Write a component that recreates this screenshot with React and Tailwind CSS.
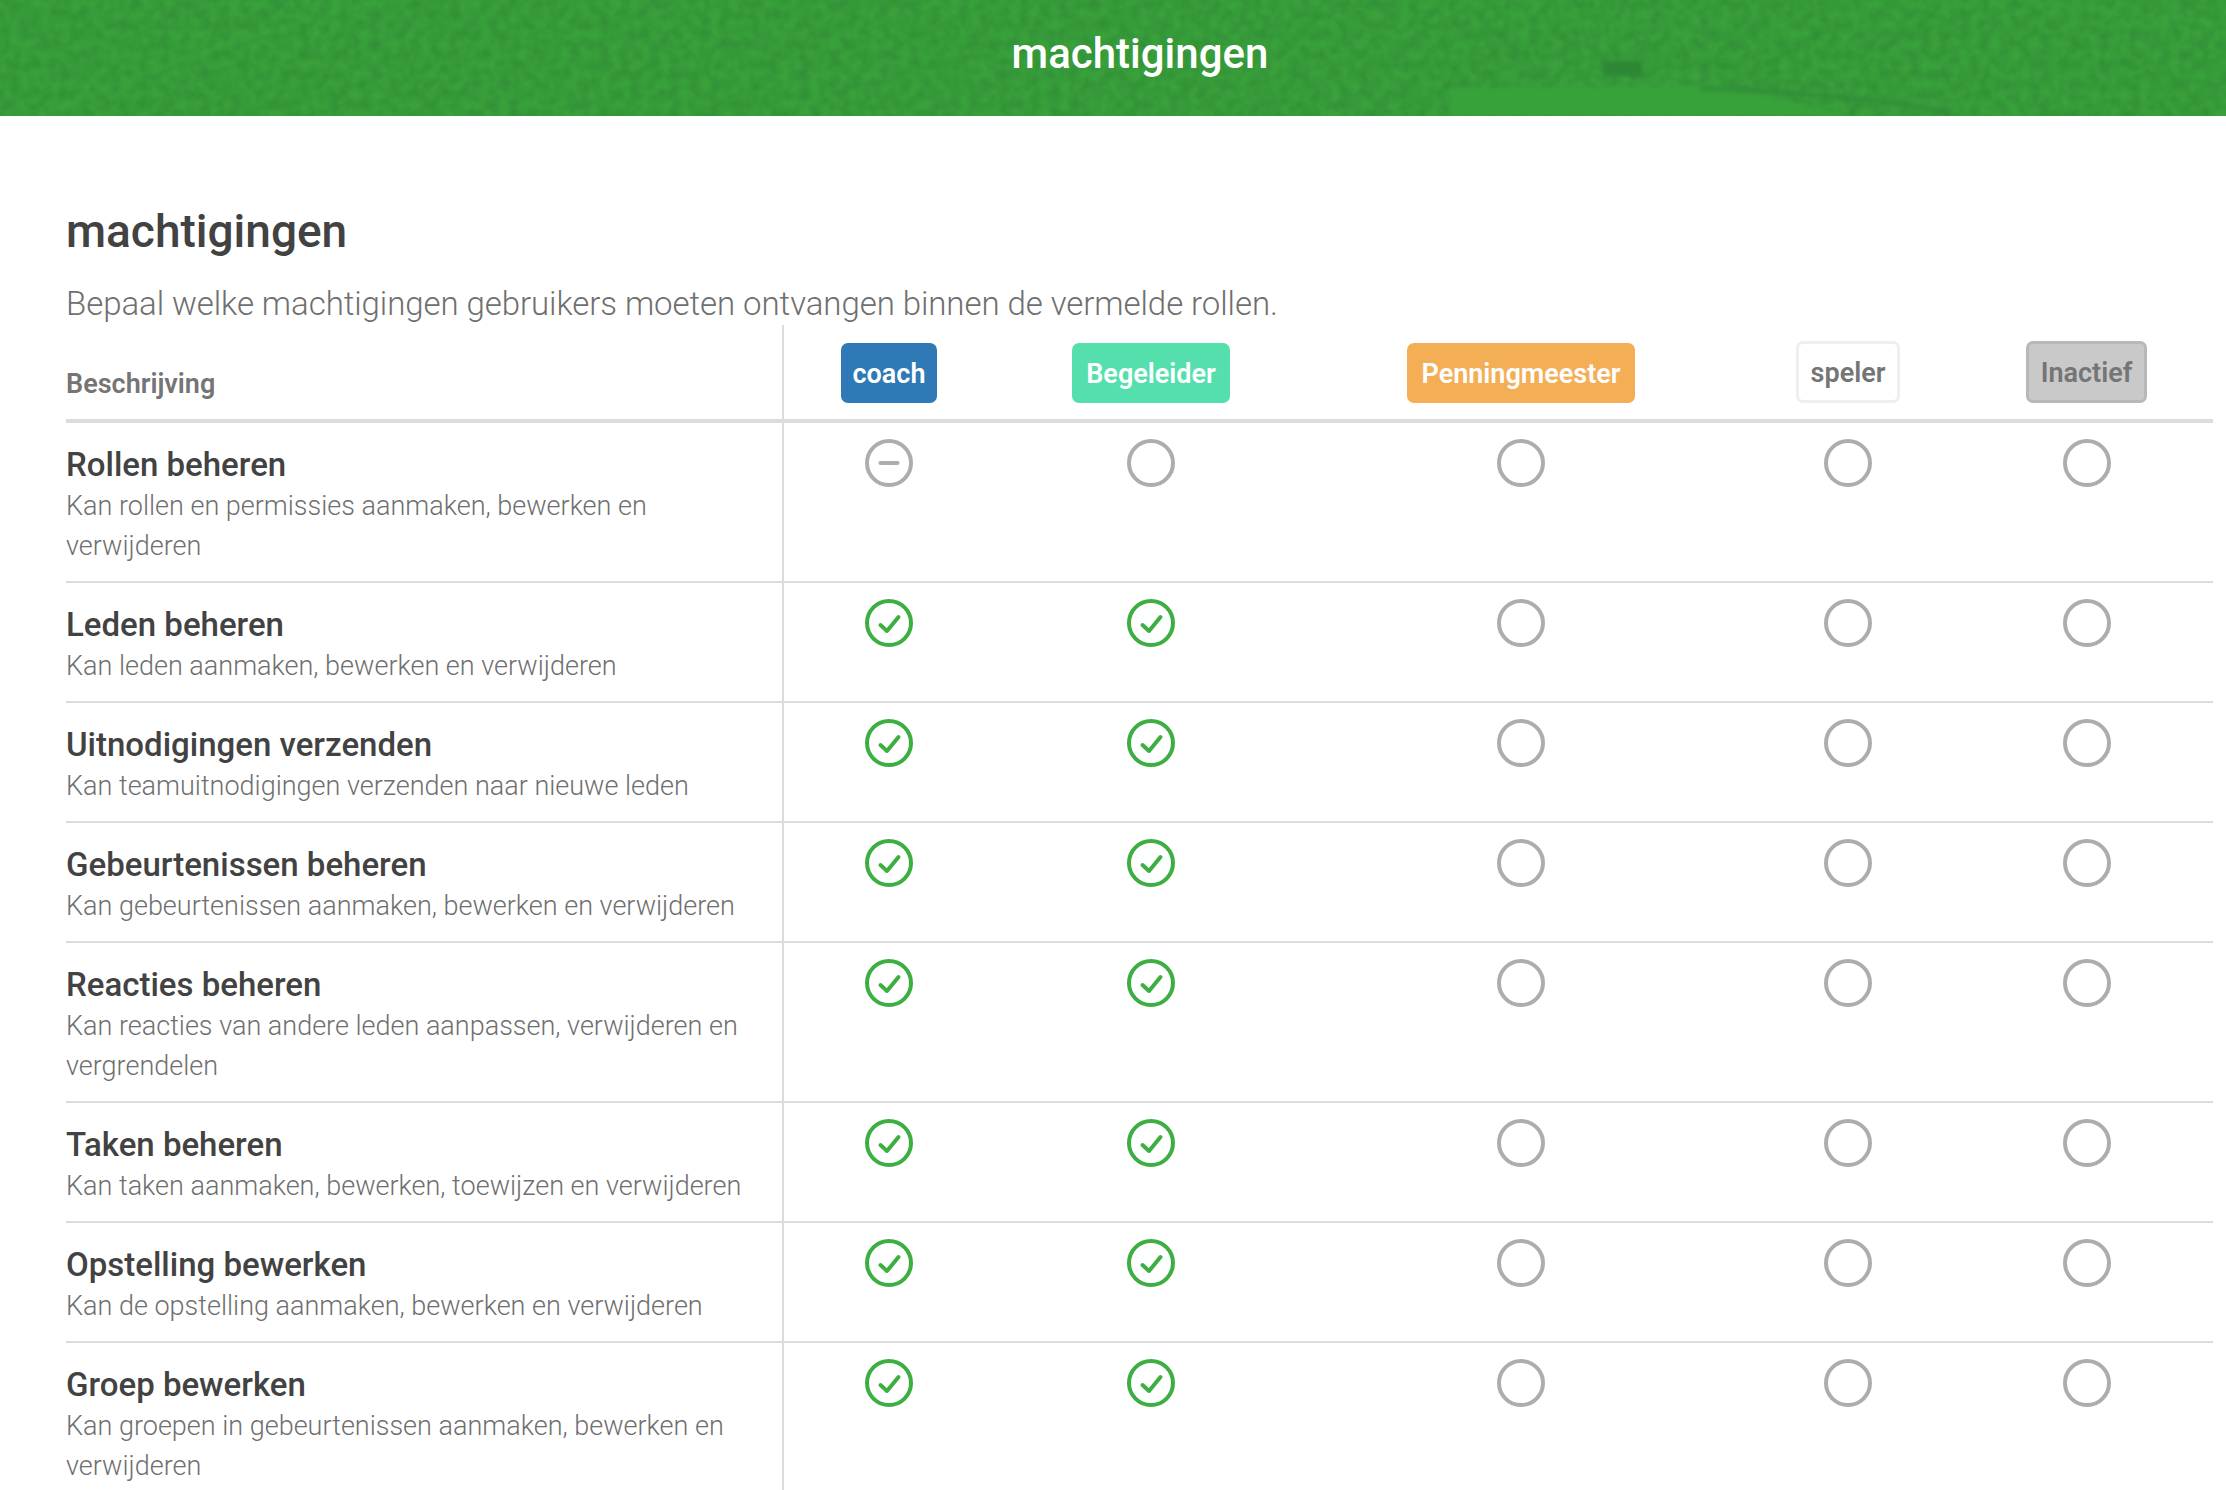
import React from 'react';

const columns = 'grid grid-cols-[716px_214px_310px_430px_224px_253px]';

const rows = [
  { title: 'Rollen beheren', lines: ['Kan rollen en permissies aanmaken, bewerken en', 'verwijderen'], coach: 'partial', begeleider: 'off' },
  { title: 'Leden beheren', lines: ['Kan leden aanmaken, bewerken en verwijderen'], coach: 'on', begeleider: 'on' },
  { title: 'Uitnodigingen verzenden', lines: ['Kan teamuitnodigingen verzenden naar nieuwe leden'], coach: 'on', begeleider: 'on' },
  { title: 'Gebeurtenissen beheren', lines: ['Kan gebeurtenissen aanmaken, bewerken en verwijderen'], coach: 'on', begeleider: 'on' },
  { title: 'Reacties beheren', lines: ['Kan reacties van andere leden aanpassen, verwijderen en', 'vergrendelen'], coach: 'on', begeleider: 'on' },
  { title: 'Taken beheren', lines: ['Kan taken aanmaken, bewerken, toewijzen en verwijderen'], coach: 'on', begeleider: 'on' },
  { title: 'Opstelling bewerken', lines: ['Kan de opstelling aanmaken, bewerken en verwijderen'], coach: 'on', begeleider: 'on' },
  { title: 'Groep bewerken', lines: ['Kan groepen in gebeurtenissen aanmaken, bewerken en', 'verwijderen'], coach: 'on', begeleider: 'on' },
];

const Status = ({ state }) => {
  const on = state === 'on';
  const color = on ? '#3cae42' : '#adadad';
  return (
    <svg width="48" height="48" viewBox="0 0 48 48" fill="none" stroke={color} strokeWidth="4" strokeLinecap="round" strokeLinejoin="round">
      <circle cx="24" cy="24" r="22" />
      {on && <path d="M15.5 26 L22 32 L33.5 18" strokeWidth="4" />}
      {state === 'partial' && <path d="M15.5 24 H32.5" strokeWidth="4" />}
    </svg>
  );
};

const Badge = ({ className, children }) => (
  <span className={`inline-flex items-center justify-center rounded-[7px] pt-[2px] text-[27px] font-semibold ${className}`}>
    {children}
  </span>
);

const Row = ({ row }) => (
  <div className={`${columns} border-b-2 border-[#dcdcdc]`}>
    <div className="pt-[22px] pb-[15px] pr-4">
      <div className="text-[33px] leading-[40px] font-medium text-[#424242]">{row.title}</div>
      <div className="mt-[1px]">
        {row.lines.map((line) => (
          <div key={line} className="text-[27px] leading-[40px] font-light text-[#6f6f6f]">{line}</div>
        ))}
      </div>
    </div>
    <div className="flex justify-center border-l-2 border-[#dcdcdc] pt-[16px] pr-[2px]"><Status state={row.coach} /></div>
    <div className="flex justify-center pt-[16px]"><Status state={row.begeleider} /></div>
    <div className="flex justify-center pt-[16px]"><Status state="off" /></div>
    <div className="flex justify-center pt-[16px]"><Status state="off" /></div>
    <div className="flex justify-center pt-[16px]"><Status state="off" /></div>
  </div>
);

// grass photo behind the page title
const HeaderTexture = () => (
  <svg className="absolute inset-0 h-full w-full" preserveAspectRatio="none" viewBox="0 0 2226 116">
    <defs>
      <filter id="grain" colorInterpolationFilters="sRGB">
        <feTurbulence type="fractalNoise" baseFrequency="0.1" numOctaves="3" seed="7" />
        <feColorMatrix values="0 0 0 0 0.17  0 0 0 0 0.5  0 0 0 0 0.2  0 0 0 0.9 -0.2" />
        <feGaussianBlur stdDeviation="1" />
      </filter>
      <filter id="soft" colorInterpolationFilters="sRGB"><feGaussianBlur stdDeviation="2" /></filter>
    </defs>
    <rect width="2226" height="116" filter="url(#grain)" />
    <g filter="url(#soft)" fill="none" strokeWidth="2.5" opacity="0.6">
      <path d="M40 116 Q 170 60 290 25 T 420 0" stroke="#3dab40" />
      <path d="M1480 20 L1540 70 M1560 30 L1585 62 M1640 45 L1645 62 M1700 70 L1760 20 M1760 70 L1830 25 M1850 60 L1950 20" stroke="#2f8c37" />
      <path d="M2020 0 Q 2120 14 2226 24" stroke="#3dab40" />
    </g>
    <path d="M1450 88 L1720 86 L1850 116 L1450 116 Z" fill="#38a23a" filter="url(#soft)" />
    <path d="M1700 88 Q 1850 94 1950 112" stroke="#2f8c37" strokeWidth="4" fill="none" filter="url(#soft)" />
    <rect x="1604" y="61" width="38" height="15" fill="#2e8735" filter="url(#soft)" />
  </svg>
);

const App = () => (
  <div className="min-h-[1490px] overflow-hidden bg-white font-['Roboto',sans-serif]">
    <div className="relative flex h-[116px] items-center justify-center bg-[#3aa33c] pb-[10px] pl-[54px]">
      <HeaderTexture />
      <h2 className="relative text-[42px] font-medium text-white">machtigingen</h2>
    </div>

    <div className="pt-[85px] pl-[66px] pr-[13px]">
      <h1 className="text-[46px] leading-[60px] font-medium text-[#424242]">machtigingen</h1>
      <p className="mt-[21px] text-[33px] leading-[43px] font-light tracking-[-0.07px] text-[#6f6f6f]">
        Bepaal welke machtigingen gebruikers moeten ontvangen binnen de vermelde rollen.
      </p>

      <div className={`${columns} h-[98px] border-b-4 border-[#dcdcdc]`}>
        <div className="flex items-end pb-[15px] text-[27px] font-semibold text-[#757575]">Beschrijving</div>
        <div className="flex justify-center border-l-2 border-[#dcdcdc] pt-[18px] pr-[2px]">
          <div><Badge className="h-[60px] bg-[#2f79b6] px-[11px] text-white">coach</Badge></div>
        </div>
        <div className="flex justify-center pt-[18px]"><div><Badge className="h-[60px] bg-[#55dfad] px-[14px] text-white">Begeleider</Badge></div></div>
        <div className="flex justify-center pt-[18px]"><div><Badge className="h-[60px] bg-[#f4ae56] px-[14px] text-white">Penningmeester</Badge></div></div>
        <div className="flex justify-center pt-[16px]">
          <div><Badge className="h-[62px] border-[3px] border-[#eeeeee] bg-white px-[12px] text-[#757575]">speler</Badge></div>
        </div>
        <div className="flex justify-center pt-[16px]">
          <div><Badge className="h-[62px] border-[3px] border-[#b8b8b8] bg-[#c9c9c9] px-[12px] text-[#757575]">Inactief</Badge></div>
        </div>
      </div>

      {rows.map((row) => <Row key={row.title} row={row} />)}
    </div>
  </div>
);

export default App;
